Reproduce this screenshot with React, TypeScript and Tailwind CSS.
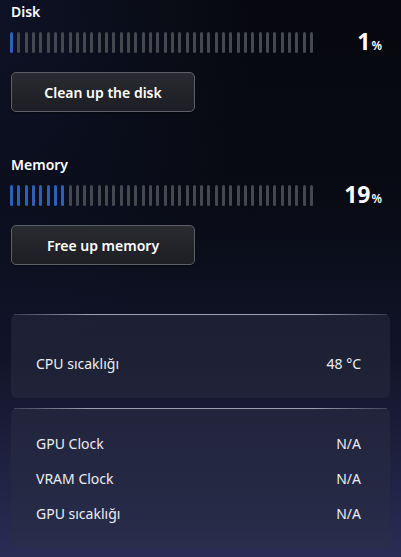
import React from "react";

const SEGMENTS = 42;

function Bar({ percent }: { percent: number }) {
  const filled = Math.max(1, Math.round((percent / 100) * SEGMENTS));
  return (
    <div className="flex w-[303px] justify-between h-[21px]">
      {Array.from({ length: SEGMENTS }).map((_, i) => (
        <div
          key={i}
          className={
            "w-[3px] h-full rounded-full " +
            (i < filled ? "bg-[#2f60b8]" : "bg-[#46484f]")
          }
        />
      ))}
    </div>
  );
}

function Usage({
  label,
  percent,
  button,
}: {
  label: string;
  percent: number;
  button: string;
}) {
  return (
    <div className="flex flex-col">
      <div className="text-[14px] font-semibold text-white leading-[20px] pl-[1px]">{label}</div>
      <div className="flex items-center mt-[7px]">
        <Bar percent={percent} />
        <div className="ml-auto flex items-baseline text-white">
          <span className="text-[23px] font-bold leading-[24px]">{percent}</span>
          <span className="text-[12px] font-semibold ml-[1px]">%</span>
        </div>
      </div>
      <button className="mt-[17px] ml-[1px] w-[184px] h-[40px] rounded-[5px] border border-[#5d6068] bg-gradient-to-b from-[#2a2b31] to-[#1d1e23] text-white text-[14px] font-semibold shadow-[0_1px_2px_rgba(0,0,0,0.5)]">
        {button}
      </button>
    </div>
  );
}

function Row({ k, v }: { k: string; v: string }) {
  return (
    <div className="flex justify-between items-center h-[35px] px-[25px] text-[14px] text-[#eceef3]">
      <span>{k}</span>
      <span className="mr-[4px]">{v}</span>
    </div>
  );
}

function Panel({ children, className }: { children: React.ReactNode; className?: string }) {
  return (
    <div
      className={
        "relative mx-[11px] rounded-[6px] bg-[rgba(42,45,66,0.5)] " + (className || "")
      }
    >
      <div className="absolute left-[3px] right-[3px] top-0 h-[1px] bg-[linear-gradient(90deg,rgba(140,143,160,0.3),rgba(170,173,190,0.9)_20%,rgba(170,173,190,0.9)_80%,rgba(140,143,160,0.3))]" />
      {children}
    </div>
  );
}

export default function App() {
  return (
    <div
      className="relative w-[401px] h-[557px] overflow-hidden bg-[linear-gradient(180deg,#07080e_0%,#080a14_35%,#12152a_65%,#2a2c55_100%)]"
      style={{ fontFamily: '"Noto Sans", "Open Sans", sans-serif' }}
    >
      <div className="absolute inset-0 bg-[radial-gradient(ellipse_at_0%_0%,rgba(20,28,60,0.5),transparent_45%)] pointer-events-none" />
      <div className="relative flex flex-col pt-[2px]">
        <div className="pl-[10px] pr-[19px]">
          <Usage label="Disk" percent={1} button="Clean up the disk" />
        </div>
        <div className="pl-[10px] pr-[19px] mt-[43px]">
          <Usage label="Memory" percent={19} button="Free up memory" />
        </div>
        <Panel className="mt-[49px] h-[84px] flex flex-col justify-center pt-[14px]">
          <Row k="CPU sıcaklığı" v="48 °C" />
        </Panel>
        <Panel className="mt-[10px] h-[140px] flex flex-col justify-center">
          <Row k="GPU Clock" v="N/A" />
          <Row k="VRAM Clock" v="N/A" />
          <Row k="GPU sıcaklığı" v="N/A" />
        </Panel>
      </div>
    </div>
  );
}
